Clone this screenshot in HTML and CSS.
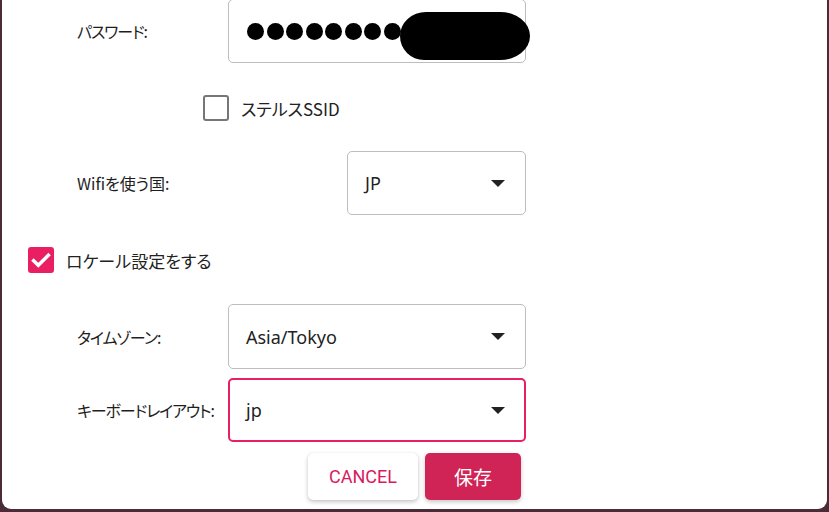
FILE: index.html
```html
<!DOCTYPE html>
<html lang="ja">
<head>
<meta charset="utf-8">
<title>設定</title>
<link rel="stylesheet" href="styles.css">
</head>
<body>
<div class="dialog">
  <div class="row row-password">
    <label class="label kana">パスワード:</label>
    <div class="field">
      <div class="box">
        <div class="dots">
          <span class="dot"></span><span class="dot"></span><span class="dot"></span><span class="dot"></span>
          <span class="dot"></span><span class="dot"></span><span class="dot"></span><span class="dot"></span>
        </div>
      </div>
      <div class="redact"></div>
    </div>
  </div>

  <div class="row row-ssid">
    <span class="check"></span>
    <span class="check-label">ステルスSSID</span>
  </div>

  <div class="row row-wifi">
    <label class="label">Wifiを使う国:</label>
    <div class="box select narrow">
      <span class="value">JP</span>
      <span class="arrow"></span>
    </div>
  </div>

  <div class="row row-locale">
    <span class="check checked">
      <svg viewBox="0 0 24 24" width="26" height="26"><path d="M5.2 12.6l4.3 4.3 9.3-9.3" fill="none" stroke="#fff" stroke-width="3.2" stroke-linecap="square"/></svg>
    </span>
    <span class="check-label">ロケール設定をする</span>
  </div>

  <div class="row row-tz">
    <label class="label kana">タイムゾーン:</label>
    <div class="box select wide">
      <span class="value">Asia/Tokyo</span>
      <span class="arrow"></span>
    </div>
  </div>

  <div class="row row-kb">
    <label class="label kana">キーボードレイアウト:</label>
    <div class="box select wide focused">
      <span class="value">jp</span>
      <span class="arrow"></span>
    </div>
  </div>

  <div class="actions">
    <button class="btn btn-cancel">CANCEL</button>
    <button class="btn btn-save">保存</button>
  </div>
</div>
</body>
</html>
```

FILE: styles.css
```css
html, body {
  margin: 0;
  padding: 0;
  width: 829px;
  height: 512px;
  overflow: hidden;
  background: #4a2b37;
}

body {
  font-family: "Noto Sans", "Noto Sans CJK JP", sans-serif;
  color: #212121;
}

.dialog {
  margin-left: 2px;
  width: 825px;
  height: 509px;
  background: #ffffff;
  border-radius: 0 0 9px 9px;
  overflow: hidden;
}

.row {
  display: flex;
  align-items: center;
  width: 524px;
}

.label {
  width: 151px;
  padding-left: 75px;
  flex: none;
  font-family: "Noto Sans CJK JP", sans-serif;
  font-feature-settings: "palt";
  font-size: 16px;
  color: #1e1e1e;
}

.label.kana {
  letter-spacing: -1.1px;
}

.box {
  box-sizing: border-box;
  height: 64px;
  border: 1px solid #bdbdbd;
  border-radius: 5px;
  background: #fff;
  display: flex;
  align-items: center;
}

.field {
  position: relative;
  width: 298px;
}

.row-password {
  margin-top: -1px;
}

.row-password .box {
  width: 298px;
  height: 64px;
  padding-left: 18px;
}

.dots {
  display: flex;
  gap: 2.5px;
  padding-top: 1px;
}

.dot {
  width: 17px;
  height: 17px;
  border-radius: 50%;
  background: #000;
}

.redact {
  position: absolute;
  left: 172px;
  top: 13px;
  width: 130px;
  height: 48px;
  background: #000;
  border-radius: 26px 30px 30px 24px / 24px 24px 24px 24px;
}

.row-ssid {
  margin-top: 32px;
  padding-left: 201px;
  height: 26px;
}

.check {
  box-sizing: border-box;
  width: 26px;
  height: 26px;
  border: 2.5px solid #767676;
  border-radius: 3px;
  flex: none;
  display: flex;
  align-items: center;
  justify-content: center;
}

.check.checked {
  border: none;
  background: #e91e63;
}

.check-label {
  margin-left: 12px;
  font-family: "Noto Sans CJK JP", sans-serif;
  font-feature-settings: "palt";
  font-size: 17px;
  color: #222;
}

.row-wifi {
  margin-top: 30px;
}

.select {
  padding-left: 17px;
  padding-right: 20px;
  justify-content: space-between;
}

.value {
  font-family: "Noto Sans", sans-serif;
  font-size: 18px;
  color: #222;
}

.arrow {
  width: 0;
  height: 0;
  border-left: 7px solid transparent;
  border-right: 7px solid transparent;
  border-top: 7px solid #222;
}

.narrow {
  width: 179px;
  margin-left: auto;
}

.wide {
  width: 298px;
}

.row-locale {
  margin-top: 32px;
  padding-left: 26px;
  height: 26px;
}

.row-tz {
  margin-top: 31px;
}

.row-tz .box {
  height: 65px;
}

.row-kb {
  margin-top: 9px;
}

.focused {
  border: 2px solid #e91e63;
  padding-left: 16px;
  padding-right: 19px;
}

.actions {
  display: flex;
  gap: 7px;
  margin-top: 11px;
  padding-left: 306px;
}

.btn {
  height: 47px;
  border: none;
  border-radius: 5px;
  font-size: 18px;
  cursor: pointer;
}

.btn-cancel {
  width: 110px;
  background: #fff;
  color: #d81b60;
  font-family: Roboto, "Noto Sans", sans-serif;
  box-shadow: 0 2px 4px rgba(0, 0, 0, 0.22), 0 0 1px rgba(0, 0, 0, 0.15);
}

.btn-save {
  width: 96px;
  background: #d02356;
  color: #fff;
  font-family: "Noto Sans CJK JP", sans-serif;
  font-size: 19px;
  box-shadow: 0 2px 4px rgba(0, 0, 0, 0.22);
}
```
